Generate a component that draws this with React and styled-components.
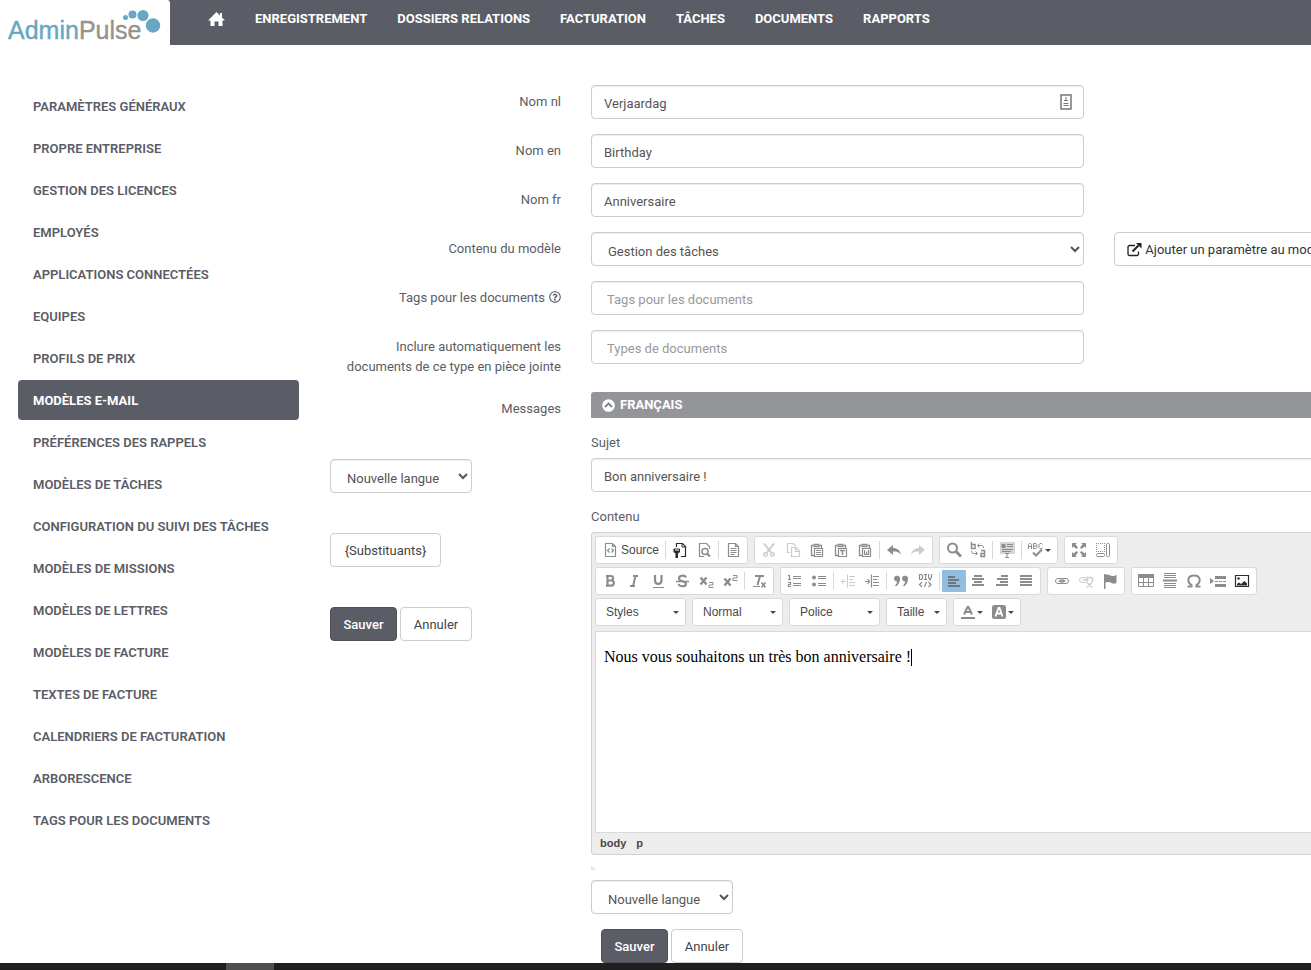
import { useState } from "react";
import styled, { createGlobalStyle, css } from "styled-components";
import { FaRegQuestionCircle } from "react-icons/fa";

const GlobalStyle = createGlobalStyle`
  *, *::before, *::after {
    box-sizing: border-box;
  }
  body {
    margin: 0;
    overflow-x: hidden;
    background: #fff;
    color: #5b5d66;
    font-family: Roboto, "Liberation Sans", sans-serif;
    font-size: 13px;
    line-height: 20px;
  }
  button, input, select {
    font: inherit;
  }
`;

const Page = styled.div`
  display: flex;
  flex-direction: column;
  min-height: 100vh;
  overflow: hidden;
`;

/* Header */

const Header = styled.header`
  display: flex;
  height: 45px;
  background: #5b5d66;
`;

const LogoLink = styled.a`
  flex: none;
  width: 170px;
  background: #fff;
  border-top-right-radius: 3px;
`;

const Nav = styled.nav`
  display: flex;
  align-items: center;
  gap: 30px;
  height: 38px;
  padding-left: 38px;
`;

const NavLink = styled.a`
  display: flex;
  color: #fff;
  font-weight: 700;
  text-decoration: none;
  text-transform: uppercase;
  white-space: nowrap;
`;

/* Sidebar */

const Body = styled.div`
  display: flex;
  flex: 1;
  gap: 31px;
  padding: 40px 0 0 18px;
`;

const Sidebar = styled.nav`
  display: flex;
  flex: none;
  flex-direction: column;
  gap: 2px;
  width: 281px;
  padding-top: 1px;
`;

const SidebarLink = styled.a`
  padding: 11px 15px 9px;
  border-radius: 4px;
  background: ${({ $active }) => ($active ? "#5b5d66" : "transparent")};
  color: ${({ $active }) => ($active ? "#fff" : "#5b5d66")};
  font-weight: ${({ $active }) => ($active ? 700 : 600)};
  text-decoration: none;
  text-transform: uppercase;
`;

/* Form */

const Form = styled.form`
  display: flex;
  flex: 1;
  flex-direction: column;
  gap: 15px;
  min-width: 0;
  margin-right: -50px;
`;

const Row = styled.div`
  display: grid;
  grid-template-columns: 231px minmax(0, 2fr) minmax(0, 1fr);
  column-gap: 30px;
  align-items: start;
`;

const Label = styled.label`
  padding-top: 7px;
  text-align: right;
`;

const HelpIcon = styled(FaRegQuestionCircle)`
  width: 12px;
  height: 12px;
  margin-left: 4px;
  vertical-align: -1px;
`;

const controlStyles = css`
  height: 34px;
  border: 1px solid #ccc;
  border-radius: 4px;
  background: #fff;
  color: #555;
`;

const Input = styled.input`
  ${controlStyles}
  display: block;
  width: 100%;
  padding: 7px ${({ $tags }) => ($tags ? 15 : 12)}px 5px;
  box-shadow: inset 0 1px 1px rgba(0, 0, 0, 0.075);
  &::placeholder {
    color: #999;
    opacity: 1;
  }
`;

const InputWrap = styled.div`
  position: relative;
`;

const InputIcon = styled.svg`
  position: absolute;
  top: 9px;
  right: 12px;
`;

const Select = styled.select`
  ${controlStyles}
  width: ${({ $compact }) => ($compact ? "142px" : "100%")};
  padding: 8px 0 4px 12px;
  box-shadow: inset 0 1px 1px rgba(0, 0, 0, 0.075);
`;

const Button = styled.button`
  ${controlStyles}
  display: inline-flex;
  align-items: center;
  justify-content: ${({ $width }) => ($width ? "center" : "flex-start")};
  gap: 3px;
  width: ${({ $width }) => $width || "auto"};
  padding: 7px 12px 5px;
  color: ${({ $width }) => ($width ? "#444" : "#333")};
  white-space: nowrap;
  ${({ $primary }) =>
    $primary &&
    css`
      border-color: #4f5159;
      background: #5b5d66;
      color: #fff;
      font-weight: 500;
    `}
`;

const ButtonBar = styled.div`
  display: flex;
  gap: 3px;
  padding-left: ${({ $inset }) => ($inset ? 10 : 0)}px;
`;

const SideActions = styled.div`
  display: flex;
  flex-direction: column;
  align-items: flex-start;
  gap: 40px;
`;

const SideTitle = styled.div`
  align-self: flex-end;
  padding-top: 7px;
`;

const Messages = styled.div`
  display: flex;
  grid-column: 2 / -1;
  flex-direction: column;
  gap: 15px;
`;

const LanguageBar = styled.button`
  display: flex;
  align-items: center;
  gap: 5px;
  height: 26px;
  padding: 0 11px;
  border: 0;
  border-radius: 3px 3px 0 0;
  background: #949599;
  color: #fff;
  font-weight: 700;
  text-transform: uppercase;
`;

const Field = styled.div`
  display: flex;
  flex-direction: column;
  gap: 5px;
`;

/* Editor */

const EditorFrame = styled.div`
  border: 1px solid #d1d1d1;
  border-radius: 3px;
  background: #ededed;
`;

const Toolbar = styled.div`
  display: flex;
  flex-direction: column;
  gap: 3px;
  padding: 3px 3px 5px;
`;

const ToolbarRow = styled.div`
  display: flex;
  gap: 6px;
`;

const ToolGroup = styled.div`
  display: flex;
  align-items: center;
  height: 28px;
  padding: 0 2px;
  border: 1px solid #d9d9d9;
  border-radius: 3px;
  background: #fff;
`;

const ToolButton = styled.button`
  display: flex;
  align-items: center;
  gap: 3px;
  height: 22px;
  padding: 0 4px;
  border: 0;
  border-radius: 1px;
  background: ${({ $active }) => ($active ? "#92bce0" : "transparent")};
  color: ${({ $dark, $active }) => ($dark ? "#2b2b2b" : $active ? "#6b7780" : "#8c8c8c")};
  font: 12px/16px "Liberation Sans", Arial, sans-serif;
  &:disabled {
    color: #ccc;
  }
`;

const ToolText = styled.span`
  color: #484848;
`;

const ToolSeparator = styled.span`
  width: 1px;
  height: 18px;
  margin: 0 2px;
  background: #d9d9d9;
`;

const Caret = styled.span`
  width: 6px;
  margin-left: -2px;
  border: 3px solid transparent;
  border-top-color: #484848;
  border-bottom: 0;
`;

const Combo = styled.div`
  position: relative;
  &::after {
    content: "";
    position: absolute;
    top: 13px;
    right: 7px;
    border: 3px solid transparent;
    border-top-color: #484848;
    border-bottom: 0;
    pointer-events: none;
  }
`;

const ComboSelect = styled.select`
  width: ${({ $small }) => ($small ? 61 : 91)}px;
  height: 28px;
  padding: 0 10px;
  appearance: none;
  border: 1px solid #d9d9d9;
  border-radius: 3px;
  background: #fff;
  color: #484848;
  font: 12px/16px "Liberation Sans", Arial, sans-serif;
`;

const EditorContent = styled.div`
  height: 202px;
  margin: 0 3px;
  padding: 15px 8px;
  border: 1px solid #d9d9d9;
  background: #fff;
  color: #000;
  font: 16px/20px "Liberation Serif", "Times New Roman", serif;
`;

const TextCursor = styled.span`
  display: inline-block;
  width: 1px;
  height: 17px;
  background: #000;
  vertical-align: -4px;
`;

const ElementPath = styled.div`
  display: flex;
  gap: 10px;
  height: 21px;
  padding: 0 8px;
  color: #484848;
  font: bold 11px/20px "Liberation Sans", Arial, sans-serif;
`;

const PanelCorner = styled.div`
  width: 5px;
  height: 5px;
  margin: -5px 0 -5px;
  background: linear-gradient(45deg, #e6e6e6 50%, transparent 50%);
`;

const Taskbar = styled.footer`
  display: flex;
  height: 7px;
  padding-left: 226px;
  background: #1f1f1f;
`;

const TaskbarItem = styled.div`
  width: 48px;
  background: #4f4f4f;
`;

/* Icons */

const pageOutline = "M3.5 1.5h7l3 3v10h-10z M10.5 1.5v3h3";
const clipboard = "M4 3.5H2.5v10H5 M11 3.5h1.5V6 M5 2.5h5v2H5z";

const icons = {
  source: (
    <>
      <path d={pageOutline} strokeWidth="1.2" />
      <path d="M7.5 6.5l-2 2 2 2 M9.5 6.5l2 2-2 2" strokeWidth="1.2" />
    </>
  ),
  wrench: (
    <>
      <path d="M4.5 5V1.5h6l3 3v10H9" strokeWidth="1.2" />
      <path d="M10 1.5v3.5h3.5" />
      <path d="M1.500 7v3l2 1.500V16h2.500v-4.500L8 10V7L6.500 6v3h-1V6h-1v3h-1V6z" fill="currentColor" stroke="none" />
    </>
  ),
  preview: (
    <>
      <path d="M8 14.500H3.500v-13h7l3 3V7" strokeWidth="1.200" />
      <circle cx="9" cy="9.500" r="3" strokeWidth="1.500" />
      <path d="M11 11.500l3 3" strokeWidth="2" />
    </>
  ),
  templates: (
    <>
      <path d={pageOutline} strokeWidth="1.2" />
      <path d="M5.500 6.500h6 M5.500 8.500h6 M5.500 10.500h6 M5.500 12.500h4" />
    </>
  ),
  cut: (
    <>
      <path d="M3 1.500l7.500 9.500 M13 1.500L5.500 11" strokeWidth="2" />
      <circle cx="4.500" cy="12.500" r="1.700" strokeWidth="1.500" />
      <circle cx="11.500" cy="12.500" r="1.700" strokeWidth="1.500" />
    </>
  ),
  copy: <path d="M5 10.500H2.500v-9H8l2.500 2.500 M6.500 5.500H11l3.500 3.500v5.500h-8z M10.500 5.500v4h4" strokeWidth="1.2" />,
  paste: (
    <>
      <path d={clipboard} strokeWidth="1.3" />
      <path d="M5.500 6.500h8v8h-8z M7 8.500h5 M7 10.500h5 M7 12.500h5" strokeWidth="1.2" />
    </>
  ),
  pasteText: (
    <>
      <path d={clipboard} strokeWidth="1.3" />
      <path d="M5.500 6.500h8v8h-8z" strokeWidth="1.2" />
      <path d="M7 8.500h5 M9.500 8.500v4.500" strokeWidth="1.500" />
    </>
  ),
  pasteWord: (
    <>
      <path d={clipboard} strokeWidth="1.3" />
      <path d="M5.500 6.500h8v8h-8z" strokeWidth="1.2" />
      <path d="M7.500 8v4.500h4V8 M9.500 9.500v3" strokeWidth="1.200" />
    </>
  ),
  undo: <path d="M1 8l6-5v3c4 0 7 2 8 7-2-3-4-3.500-8-3.500V13z" fill="currentColor" stroke="none" />,
  redo: <path d="M15 8L9 3v3c-4 0-7 2-8 7 2-3 4-3.500 8-3.500V13z" fill="currentColor" stroke="none" />,
  find: (
    <>
      <circle cx="6.500" cy="6" r="4.500" strokeWidth="2" />
      <path d="M10 9.500l5 5" strokeWidth="3" />
    </>
  ),
  replace: (
    <>
      <path d="M1.500 0v6.500h3.500v-4H1.500 M11 8.500h3.500v6H11v-3h3.500" strokeWidth="1.500" />
      <path d="M8 3.500h3.500c1.500 0 2 1 2 2.500 M9.500 1.500l-2 2 2 2 M1.500 9c0 1.500 1 2.500 2.500 2.500h3 M5.500 9.500l2 2-2 2" />
    </>
  ),
  selectAll: (
    <>
      <path d="M1 0h15v12H1z" fill="#d4d4d4" stroke="none" />
      <path d="M3 2.500h3v3H3z" fill="currentColor" />
      <path d="M8 2.500h6 M8 4.500h6 M3 7.500h11 M3 9.500h9 M6 11.500h4 M8 11.500v4 M6 15.500h4" />
    </>
  ),
  spell: (
    <>
      <path d="M.500 7V2.500l1-1h1l1 1V7 M.500 4.500h3 M5.500 1.500v5h2.500l1-1v-1L8 4l1-1v-.500l-1-1z M5.500 4H8 M14.500 2.500l-1-1H12l-1 1v3l1 1h1.500l1-1" />
      <path d="M5 10.500l3 3 6-6" strokeWidth="2" />
    </>
  ),
  maximize: (
    <path
      d="M1 1h5L4.500 2.500l2.500 3L5.500 7l-3-2.500L1 6z M15 1v5l-1.500-1.500-3 2.500L9 5.500l2.500-3L10 1z M1 15v-5l1.500 1.500 3-2.500L7 10.500l-2.500 3L6 15z M15 15h-5l1.500-1.500-2.500-3L10.500 9l3 2.500L15 10z"
      fill="currentColor"
      stroke="none"
    />
  ),
  blocks: (
    <>
      <path d="M1 1.500h9 M1 9.500h9 M1.500 1v9 M9.500 1v9" strokeDasharray="1 1" />
      <rect x="11.500" y="1.500" width="3" height="13" rx="1" />
      <rect x="1.500" y="11.500" width="8" height="3" rx="1" />
    </>
  ),
  bold: <path d="M5.500 3v10 M4 3h5c2.800 0 2.800 4.500 0 4.500H6h3.200c3.500 0 3.500 5.200 0 5.200H4" strokeWidth="2.200" />,
  italic: <path d="M7 3h5 M4 13h5 M9.500 3l-2.500 10" strokeWidth="2" />,
  underline: (
    <>
      <path d="M5 2v5.500c0 4.500 6.500 4.500 6.500 0V2" strokeWidth="2.200" />
      <path d="M3 14.500h11" />
    </>
  ),
  strike: (
    <>
      <path d="M12 4.500C11 2 5 2 5 5.500S12 7.500 12 11c0 3-6.500 3-7.500 0" strokeWidth="2.200" />
      <path d="M2 8.500h13" strokeWidth="1.500" />
    </>
  ),
  sub: (
    <>
      <path d="M2.500 4.500l6 7 M8.500 4.500l-6 7" strokeWidth="2.400" />
      <path d="M11 9.500h4v2.500h-4v2.500h4.500" />
    </>
  ),
  sup: (
    <>
      <path d="M2.500 5.500l6 7 M8.500 5.500l-6 7" strokeWidth="2.400" />
      <path d="M11 2.500h4V5h-4v2.500h4.500" />
    </>
  ),
  removeFormat: (
    <>
      <path d="M4 3h9 M9 3l-2.500 9" strokeWidth="2" />
      <path d="M2 13.500h7" />
      <path d="M10.500 9.500l4 5 M14.500 9.500l-4 5" strokeWidth="1.600" />
    </>
  ),
  numbered: (
    <path d="M1 2.500h1.500v4 M1 6.500h3 M1 9.500h2.500v2H1.500v2H4 M6 3.500h8 M6 5.500h8 M6 10.500h8 M6 12.500h8" strokeWidth="1.200" />
  ),
  bullets: (
    <>
      <circle cx="3" cy="4.500" r="2" fill="currentColor" stroke="none" />
      <circle cx="3" cy="11.500" r="2" fill="currentColor" stroke="none" />
      <path d="M7 3.500h8 M7 5.500h8 M7 10.500h8 M7 12.500h8" strokeWidth="1.200" />
    </>
  ),
  outdent: <path d="M7.500 1.500v13 M9 3.500h6 M9 6.500h4 M9 9.500h6 M9 12.500h6 M1 8.500h5 M3.500 6l-2 2.500 2 2.500" />,
  indent: <path d="M7.500 1.500v13 M9 3.500h6 M9 6.500h4 M9 9.500h6 M9 12.500h6 M1 8.500h5 M3.500 6l2 2.500-2 2.500" strokeWidth="1.200" />,
  quote: (
    <path
      d="M1 5.500a3 3 0 1 1 6 .500c0 3-1.500 5.500-4 7.500l-1-1c1.500-1.500 2-2.500 2-4C2 8.500 1 7 1 5.500z M9 5.500a3 3 0 1 1 6 .500c0 3-1.500 5.500-4 7.500l-1-1c1.500-1.500 2-2.500 2-4-2 0-3-1.500-3-3z"
      fill="currentColor"
      stroke="none"
    />
  ),
  div: (
    <path
      d="M2.500 1.500v5h2l1-1v-3l-1-1z M7 1.500h3 M8.500 1.500v5 M7 6.500h3 M11.500 1v3l1.500 3 1.500-3V1 M5 9L2.500 11.500 5 14 M9.500 9l-2 5 M11.500 9l2.500 2.500-2.500 2.500"
      strokeWidth="1.200"
    />
  ),
  alignLeft: <path d="M2 4h7 M2 7h11 M2 10h8 M2 13h12" strokeWidth="2" />,
  alignCenter: <path d="M4 3h8 M2 6h12 M4 9h8 M2 12h12" strokeWidth="2" />,
  alignRight: <path d="M7 3h7 M3 6h11 M6 9h8 M2 12h12" strokeWidth="2" />,
  justify: <path d="M2 3h12 M2 6h12 M2 9h12 M2 12h12" strokeWidth="2" />,
  link: (
    <>
      <rect x="1.500" y="5.500" width="8" height="5" rx="2.500" />
      <rect x="6.500" y="5.500" width="8" height="5" rx="2.500" />
      <path d="M4.500 8h7" strokeWidth="1.500" />
    </>
  ),
  unlink: (
    <>
      <rect x="1.500" y="4.500" width="8" height="5" rx="2.500" />
      <path d="M8 4.500h4c3.500 0 3.500 4 1 5 M4.500 7h6 M9 9.500l5 5 M14 9.500l-5 5" strokeWidth="1.300" />
    </>
  ),
  anchor: <path d="M2 1h1.500v1c3-1.500 4 1 7 1 1.500 0 3-.500 4-1v8c-4 2-6-1.500-8.500-1L3.500 9.500V16H2z" fill="currentColor" stroke="none" />,
  table: (
    <>
      <path d="M.500 2.500h15v11H.500z M.500 9.500h15 M5.500 5v8 M10.500 5v8" />
      <path d="M0 1h16v4H0z" fill="currentColor" stroke="none" />
    </>
  ),
  rule: (
    <>
      <path d="M2 .500h12 M2 2.500h12 M2 4.500h12 M2 10.500h12 M2 12.500h12 M2 14.500h12" strokeWidth="1.200" />
      <path d="M1 7.500h14" strokeWidth="2" />
    </>
  ),
  omega: <path d="M1.500 13.500h4V12C.500 9 1.500 2.500 8 2.500S15.500 9 10.500 12v1.500h4" strokeWidth="2" />,
  pageBreak: (
    <>
      <path d="M0 5l4 3-4 3z M5 3h11v3H5z M5 11h11v3H5z" fill="currentColor" stroke="none" />
      <path d="M5 8.500h11" strokeDasharray="3 1" />
    </>
  ),
  image: (
    <>
      <path d="M1.500 2.500h13v11h-13z" strokeWidth="1.200" />
      <path d="M3 12.500V11l2-1.500 2 1.500 3.500-3 2.500 2.500v2z" fill="currentColor" stroke="none" />
      <circle cx="4.500" cy="5.500" r="1.200" fill="currentColor" stroke="none" />
    </>
  ),
  textColor: (
    <>
      <path d="M4 10.500L7.500 3h1L12 10.500 M5.500 8h5" strokeWidth="2" />
      <path d="M1 14h14" strokeWidth="2" />
    </>
  ),
  bgColor: (
    <>
      <rect x="1" y="1" width="14" height="14" rx="2.500" fill="currentColor" stroke="none" />
      <path d="M4.500 12.500L7.500 4h1l3 8.500 M5.500 9.500h5" stroke="#fff" strokeWidth="1.800" />
    </>
  ),
};

const Icon = ({ name }) => (
  <svg width="16" height="16" viewBox="0 0 16 16" fill="none" stroke="currentColor" aria-hidden="true">
    {icons[name]}
  </svg>
);

const Logo = () => (
  <svg width="170" height="45" viewBox="0 0 170 45" role="img" aria-label="AdminPulse">
    <g fontFamily="Liberation Sans, Arial, sans-serif" fontSize="25" strokeWidth="0.4">
      <text x="8" y="39" fill="#68a6c3" stroke="#68a6c3">
        Admin<tspan fill="#98928a" stroke="#98928a">Pulse</tspan>
      </text>
    </g>
    <g fill="#68a6c3">
      <circle cx="125.500" cy="17.500" r="2.500" />
      <circle cx="132.500" cy="14.500" r="4" />
      <circle cx="143" cy="15.500" r="5.500" />
      <circle cx="153" cy="25.500" r="7.200" />
    </g>
  </svg>
);

const HomeIcon = () => (
  <svg width="17" height="15" viewBox="0 0 17 15" fill="#fff" role="img" aria-label="Accueil">
    <path d="M8.500 0L12 3.500V1h2v4.500L17 8.500h-2.500V14h-4V9.500h-4V14h-4V8.500H0z" />
  </svg>
);

const ExternalIcon = () => (
  <svg width="15" height="14" viewBox="0 0 15 14" fill="none" stroke="#222" aria-hidden="true">
    <path d="M8 2.500H2.500a1.500 1.500 0 0 0-1.500 1.500v7a1.500 1.500 0 0 0 1.500 1.500h7.500a1.500 1.500 0 0 0 1.500-1.500V8.500" strokeWidth="1.300" />
    <path d="M5.500 8.500l6-6" strokeWidth="2" />
    <path d="M9 0h5.500v5.500z" fill="#222" stroke="none" />
  </svg>
);

const CollapseIcon = ({ open }) => (
  <svg width="13" height="13" viewBox="0 0 13 13" aria-hidden="true">
    <circle cx="6.500" cy="6.500" r="6.300" fill="#fff" />
    <path d={open ? "M3 8l3.500-3.500L10 8" : "M3 5l3.500 3.500L10 5"} fill="none" stroke="#85868b" strokeWidth="2" />
  </svg>
);

const navItems = ["Enregistrement", "Dossiers relations", "Facturation", "Tâches", "Documents", "Rapports"];

const menuItems = [
  "Paramètres généraux",
  "Propre entreprise",
  "Gestion des licences",
  "Employés",
  "Applications connectées",
  "Equipes",
  "Profils de prix",
  "Modèles e-mail",
  "Préférences des rappels",
  "Modèles de tâches",
  "Configuration du suivi des tâches",
  "Modèles de missions",
  "Modèles de lettres",
  "Modèles de facture",
  "Textes de facture",
  "Calendriers de facturation",
  "Arborescence",
  "Tags pour les documents",
];

// "|" is a separator, "!" marks a disabled tool and "+" one that opens a menu
const toolRows = [
  [
    ["source", "|", "wrench", "preview", "|", "templates"],
    ["cut!", "copy!", "paste", "pasteText", "pasteWord", "|", "undo", "redo!"],
    ["find", "replace", "|", "selectAll", "|", "spell+"],
    ["maximize", "blocks"],
  ],
  [
    ["bold", "italic", "underline", "strike", "sub", "sup", "|", "removeFormat"],
    ["numbered", "bullets", "|", "outdent!", "indent", "|", "quote", "div", "|", "alignLeft", "alignCenter", "alignRight", "justify"],
    ["link", "unlink!", "anchor"],
    ["table", "rule", "omega", "pageBreak", "image"],
  ],
];

const Tools = ({ items }) => (
  <ToolGroup>
    {items.map((item, i) => {
      if (item === "|") return <ToolSeparator key={i} />;
      const name = item.replace(/[!+]/, "");
      return (
        <ToolButton
          key={i}
          type="button"
          aria-label={name}
          disabled={item.endsWith("!")}
          $active={name === "alignLeft"}
          $dark={name === "wrench" || name === "image"}
        >
          <Icon name={name} />
          {name === "source" && <ToolText>Source</ToolText>}
          {item.endsWith("+") && <Caret />}
        </ToolButton>
      );
    })}
  </ToolGroup>
);

const Editor = () => (
  <EditorFrame>
    <Toolbar>
      {toolRows.map((groups, i) => (
        <ToolbarRow key={i}>
          {groups.map((items, j) => (
            <Tools key={j} items={items} />
          ))}
        </ToolbarRow>
      ))}
      <ToolbarRow>
        {["Styles", "Normal", "Police", "Taille"].map((name) => (
          <Combo key={name}>
            <ComboSelect aria-label={name} $small={name === "Taille"}>
              <option>{name}</option>
            </ComboSelect>
          </Combo>
        ))}
        <Tools items={["textColor+", "bgColor+"]} />
      </ToolbarRow>
    </Toolbar>
    <EditorContent role="textbox" aria-label="Contenu">
      Nous vous souhaitons un très bon anniversaire !<TextCursor />
    </EditorContent>
    <ElementPath>
      <span>body</span>
      <span>p</span>
    </ElementPath>
  </EditorFrame>
);

const LanguageSelect = () => (
  <Select $compact aria-label="Nouvelle langue">
    <option>Nouvelle langue</option>
  </Select>
);

const SaveButtons = ({ inset }) => (
  <ButtonBar $inset={inset}>
    <Button type="submit" $primary $width="67px">Sauver</Button>
    <Button type="button" $width="72px">Annuler</Button>
  </ButtonBar>
);

const App = () => {
  const [open, setOpen] = useState(true);

  return (
    <Page>
      <GlobalStyle />
      <Header>
        <LogoLink href="#">
          <Logo />
        </LogoLink>
        <Nav>
          <NavLink href="#">
            <HomeIcon />
          </NavLink>
          {navItems.map((item) => (
            <NavLink key={item} href="#">{item}</NavLink>
          ))}
        </Nav>
      </Header>
      <Body>
        <Sidebar>
          {menuItems.map((item) => (
            <SidebarLink key={item} href="#" $active={item === "Modèles e-mail"}>
              {item}
            </SidebarLink>
          ))}
        </Sidebar>
        <Form onSubmit={(e) => e.preventDefault()}>
          <Row>
            <Label htmlFor="name-nl">Nom nl</Label>
            <InputWrap>
              <Input id="name-nl" defaultValue="Verjaardag" />
              <InputIcon width="12" height="16" viewBox="0 0 12 16" fill="none" stroke="#777">
                <path d="M1 1h10v14H1z" strokeWidth="1.500" />
                <path d="M6 3v4 M4 6.500h4 M3.500 9.500h5 M3.500 11.500h5" />
              </InputIcon>
            </InputWrap>
          </Row>
          <Row>
            <Label htmlFor="name-en">Nom en</Label>
            <Input id="name-en" defaultValue="Birthday" />
          </Row>
          <Row>
            <Label htmlFor="name-fr">Nom fr</Label>
            <Input id="name-fr" defaultValue="Anniversaire" />
          </Row>
          <Row>
            <Label htmlFor="content">Contenu du modèle</Label>
            <Select id="content">
              <option>Gestion des tâches</option>
            </Select>
            <Button type="button">
              <ExternalIcon />
              Ajouter un paramètre au modèle
            </Button>
          </Row>
          <Row>
            <Label htmlFor="tags">
              Tags pour les documents
              <HelpIcon />
            </Label>
            <Input id="tags" $tags placeholder="Tags pour les documents" />
          </Row>
          <Row>
            <Label htmlFor="types">Inclure automatiquement les documents de ce type en pièce jointe</Label>
            <Input id="types" $tags placeholder="Types de documents" />
          </Row>
          <Row>
            <SideActions>
              <SideTitle>Messages</SideTitle>
              <LanguageSelect />
              <Button type="button" $width="111px">{"{Substituants}"}</Button>
              <SaveButtons />
            </SideActions>
            <Messages>
              <LanguageBar type="button" aria-expanded={open} onClick={() => setOpen(!open)}>
                <CollapseIcon open={open} />
                Français
              </LanguageBar>
              {open && (
                <>
                  <Field>
                    <label htmlFor="subject">Sujet</label>
                    <Input id="subject" defaultValue="Bon anniversaire !" />
                  </Field>
                  <Field>
                    <span>Contenu</span>
                    <Editor />
                  </Field>
                </>
              )}
              <PanelCorner />
              <LanguageSelect />
              <SaveButtons inset />
            </Messages>
          </Row>
        </Form>
      </Body>
      <Taskbar>
        <TaskbarItem />
      </Taskbar>
    </Page>
  );
};

export default App;
